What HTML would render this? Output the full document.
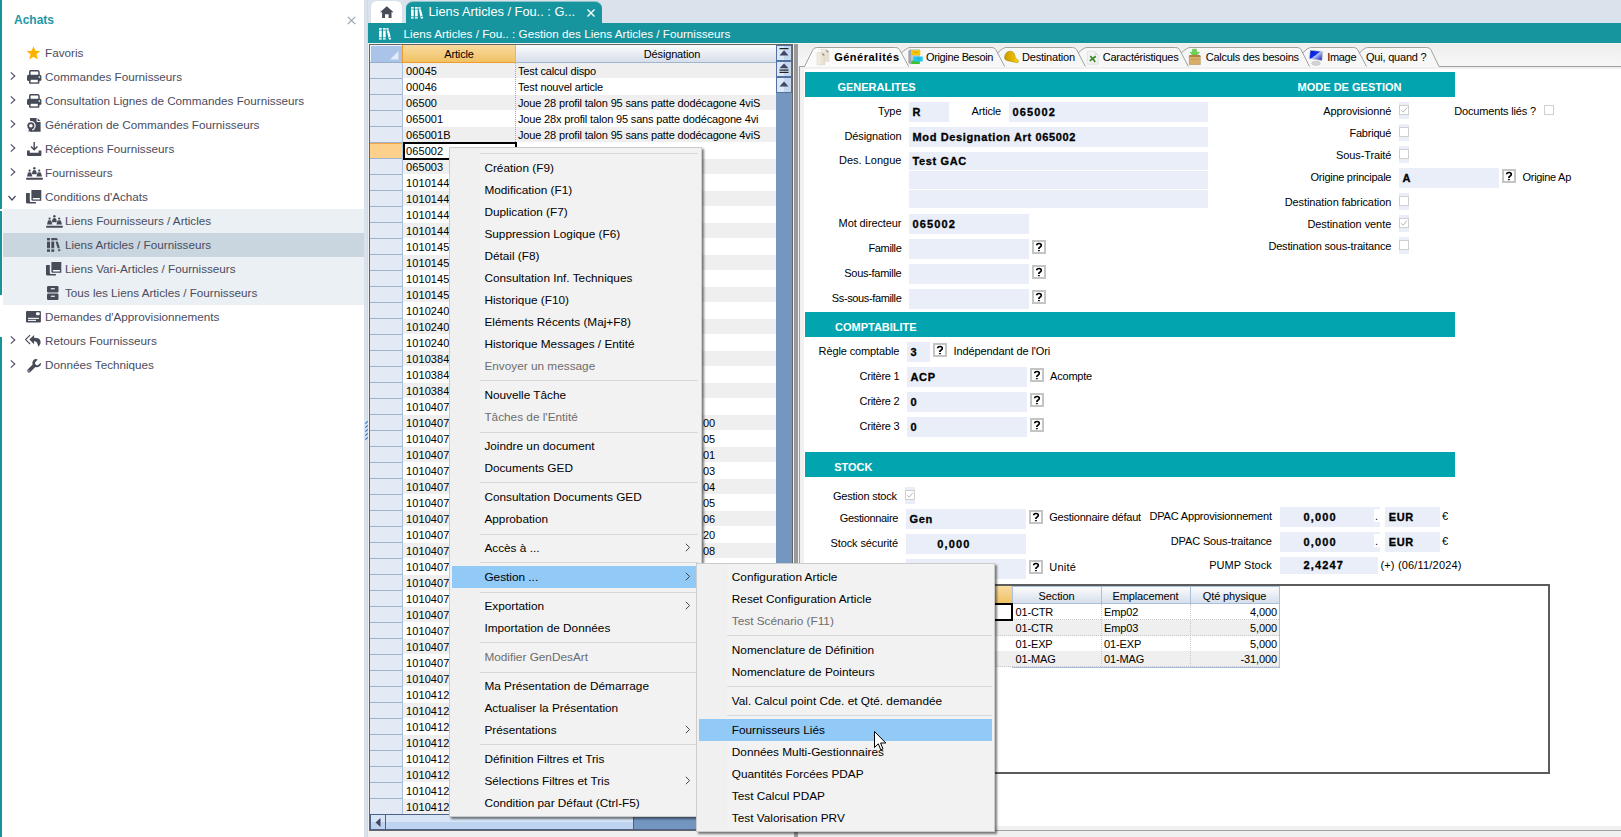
<!DOCTYPE html><html><head><meta charset="utf-8"><style>
*{margin:0;padding:0;box-sizing:border-box}
html,body{width:1621px;height:837px;overflow:hidden;background:#fff}
body{position:relative;font-family:"Liberation Sans",sans-serif;color:#000}
div{position:absolute}
.t{line-height:0;white-space:nowrap}
svg{position:absolute;overflow:visible}
</style></head><body><div style="left:0;top:0;width:364px;height:837px;background:#fff"></div>
<div style="left:0;top:0;width:2px;height:209px;background:#17939c"></div>
<div style="left:0;top:211px;width:2px;height:84px;background:#17939c"></div>
<div style="left:0;top:337px;width:2px;height:500px;background:#17939c"></div>
<div class="t" style="left:14px;top:19.54px;font-size:12px;font-weight:bold;color:#1a98a6">Achats</div>
<svg style="left:347px;top:16px" width="9" height="9" viewBox="0 0 9 9"><path d="M0.8 0.8 L8.2 8.2 M8.2 0.8 L0.8 8.2" stroke="#9aa2aa" stroke-width="1.2"/></svg>
<div style="left:3px;top:209px;width:361px;height:96px;background:#ebf0f4"></div>
<div style="left:3px;top:233px;width:361px;height:24px;background:#c9d6e0"></div>
<svg style="left:26px;top:46px" width="15" height="14" viewBox="0 0 15 14"><path d="M7.5 0.3 L9.4 4.8 L14.4 5.1 L10.5 8.3 L11.8 13.6 L7.5 10.8 L3.2 13.6 L4.5 8.3 L0.6 5.1 L5.6 4.8 Z" fill="#ffb300"/></svg>
<div class="t" style="left:45px;top:52.95px;font-size:11.7px;color:#4a4c5e">Favoris</div>
<svg style="left:9.7px;top:71.6px" width="6" height="8" viewBox="0 0 6 8"><path d="M0.8 0.4 L4.8 4 L0.8 7.6" fill="none" stroke="#4a4560" stroke-width="1.05"/></svg>
<svg style="left:26.8px;top:70px" width="15" height="14" viewBox="0 0 15 14"><path d="M2.8 5 V1.6 Q2.8 0.8 3.6 0.8 H10.6 Q12 0.8 12 2.2 V5" fill="none" stroke="#474b58" stroke-width="1.5"/><rect x="0" y="4.8" width="14.4" height="6.2" rx="1.6" fill="#474b58"/><rect x="2" y="8.4" width="10.4" height="5.4" rx="0.8" fill="#474b58"/><rect x="3.6" y="9.8" width="7.2" height="2.6" fill="#fff"/><circle cx="12.3" cy="7" r="0.85" fill="#fff"/></svg>
<div class="t" style="left:45px;top:76.95px;font-size:11.7px;color:#4a4c5e">Commandes Fournisseurs</div>
<svg style="left:9.7px;top:95.6px" width="6" height="8" viewBox="0 0 6 8"><path d="M0.8 0.4 L4.8 4 L0.8 7.6" fill="none" stroke="#4a4560" stroke-width="1.05"/></svg>
<svg style="left:26.8px;top:94px" width="15" height="14" viewBox="0 0 15 14"><path d="M2.8 5 V1.6 Q2.8 0.8 3.6 0.8 H10.6 Q12 0.8 12 2.2 V5" fill="none" stroke="#474b58" stroke-width="1.5"/><rect x="0" y="4.8" width="14.4" height="6.2" rx="1.6" fill="#474b58"/><rect x="2" y="8.4" width="10.4" height="5.4" rx="0.8" fill="#474b58"/><rect x="3.6" y="9.8" width="7.2" height="2.6" fill="#fff"/><circle cx="12.3" cy="7" r="0.85" fill="#fff"/></svg>
<div class="t" style="left:45px;top:100.95px;font-size:11.7px;color:#4a4c5e">Consultation Lignes de Commandes Fournisseurs</div>
<svg style="left:9.7px;top:119.6px" width="6" height="8" viewBox="0 0 6 8"><path d="M0.8 0.4 L4.8 4 L0.8 7.6" fill="none" stroke="#4a4560" stroke-width="1.05"/></svg>
<svg style="left:26px;top:118px" width="15" height="14" viewBox="0 0 15 14"><path d="M4 0 H10.6 V4 H14.6 V13.8 H4 Z" fill="#474b58"/><path d="M11.6 0.2 L14.5 3.1 H11.6 Z" fill="#474b58"/><circle cx="4.9" cy="7.8" r="4.8" fill="#fff"/><path d="M2.9 10 L2.5 13.8 L4.3 12.9 L6 13.8 L6.3 10.2 Z" fill="#474b58"/><circle cx="4.9" cy="7.8" r="3.6" fill="#474b58"/><circle cx="4.9" cy="7.8" r="1.8" fill="#fff"/></svg>
<div class="t" style="left:45px;top:124.95px;font-size:11.7px;color:#4a4c5e">Génération de Commandes Fournisseurs</div>
<svg style="left:9.7px;top:143.6px" width="6" height="8" viewBox="0 0 6 8"><path d="M0.8 0.4 L4.8 4 L0.8 7.6" fill="none" stroke="#4a4560" stroke-width="1.05"/></svg>
<svg style="left:26.6px;top:142px" width="15" height="14" viewBox="0 0 15 14"><path d="M7.2 0 V7.6 M4 4.6 L7.2 7.8 L10.4 4.6" fill="none" stroke="#474b58" stroke-width="1.4"/><path d="M0 8.4 H2.8 V10.8 H11.6 V8.4 H14.4 V13 Q14.4 14 13.4 14 H1 Q0 14 0 13 Z" fill="#474b58"/></svg>
<div class="t" style="left:45px;top:148.95px;font-size:11.7px;color:#4a4c5e">Réceptions Fournisseurs</div>
<svg style="left:9.7px;top:167.6px" width="6" height="8" viewBox="0 0 6 8"><path d="M0.8 0.4 L4.8 4 L0.8 7.6" fill="none" stroke="#4a4560" stroke-width="1.05"/></svg>
<svg style="left:25.8px;top:167px" width="17" height="13" viewBox="0 0 17 13"><circle cx="8.4" cy="1.2" r="1.2" fill="#474b58"/><circle cx="3.6" cy="3.6" r="1.1" fill="#474b58"/><circle cx="13.2" cy="3.6" r="1.1" fill="#474b58"/><path d="M6 7.2 Q6.2 3 8.4 3 Q10.6 3 10.8 7.2 Z" fill="#474b58"/><path d="M1 9.5 L2 5.6 Q3.6 4.8 5.2 5.6 L6.4 9.5 Z M10.4 9.5 L11.6 5.6 Q13.2 4.8 14.8 5.6 L16 9.5 Z" fill="#474b58"/><rect x="0" y="10.8" width="17" height="1.9" rx="0.9" fill="#474b58"/></svg>
<div class="t" style="left:45px;top:172.95px;font-size:11.7px;color:#4a4c5e">Fournisseurs</div>
<svg style="left:8px;top:195px" width="8" height="6" viewBox="0 0 8 6"><path d="M0.5 1 L4 5 L7.5 1" fill="none" stroke="#444a5a" stroke-width="1.2"/></svg>
<svg style="left:25.8px;top:190.1px" width="16" height="14" viewBox="0 0 16 14"><path d="M5.4 0.6 Q5.4 0 6 0 H15.3 V10.7 H6.6 Q5.4 10.7 5.4 9.5 Z" fill="#474b58"/><rect x="6.7" y="8" width="7.4" height="1.6" rx="0.8" fill="#fff"/><path d="M0 3.5 Q0 3 0.6 3 H3.8 V10.8 Q3.8 12 5 12 H9.9 V13.6 H1.6 Q0 13.6 0 12 Z" fill="#474b58"/></svg>
<div class="t" style="left:45px;top:196.95px;font-size:11.7px;color:#4a4c5e">Conditions d'Achats</div>
<svg style="left:45.8px;top:215px" width="17" height="13" viewBox="0 0 17 13"><circle cx="8.4" cy="1.2" r="1.2" fill="#474b58"/><circle cx="3.6" cy="3.6" r="1.1" fill="#474b58"/><circle cx="13.2" cy="3.6" r="1.1" fill="#474b58"/><path d="M6 7.2 Q6.2 3 8.4 3 Q10.6 3 10.8 7.2 Z" fill="#474b58"/><path d="M1 9.5 L2 5.6 Q3.6 4.8 5.2 5.6 L6.4 9.5 Z M10.4 9.5 L11.6 5.6 Q13.2 4.8 14.8 5.6 L16 9.5 Z" fill="#474b58"/><rect x="0" y="10.8" width="17" height="1.9" rx="0.9" fill="#474b58"/></svg>
<div class="t" style="left:65px;top:220.95px;font-size:11.7px;color:#4a4c5e">Liens Fournisseurs / Articles</div>
<svg style="left:47px;top:238px" width="14" height="14" viewBox="0 0 14 14"><rect x="0" y="0" width="3" height="13.8" fill="#474b58"/><rect x="4.3" y="0" width="2.9" height="13.8" fill="#474b58"/><path d="M7.2 0 L9.6 0 L11 1.4 L9.6 2.2 L7.2 2 Z" fill="#474b58"/><path d="M8.3 2.6 L10.4 2.3 L13.6 12.4 L11.5 13.6 Z" fill="#474b58"/><rect x="0" y="2.2" width="14" height="1.6" fill="#c9d6e0" opacity="0.75"/><rect x="0" y="9.9" width="14" height="1.6" fill="#c9d6e0" opacity="0.75"/></svg>
<div class="t" style="left:65px;top:244.95px;font-size:11.7px;color:#4a4c5e">Liens Articles / Fournisseurs</div>
<svg style="left:45.8px;top:262.1px" width="16" height="14" viewBox="0 0 16 14"><path d="M5.4 0.6 Q5.4 0 6 0 H15.3 V10.7 H6.6 Q5.4 10.7 5.4 9.5 Z" fill="#474b58"/><rect x="6.7" y="8" width="7.4" height="1.6" rx="0.8" fill="#fff"/><path d="M0 3.5 Q0 3 0.6 3 H3.8 V10.8 Q3.8 12 5 12 H9.9 V13.6 H1.6 Q0 13.6 0 12 Z" fill="#474b58"/></svg>
<div class="t" style="left:65px;top:268.95px;font-size:11.7px;color:#4a4c5e">Liens Vari-Articles / Fournisseurs</div>
<svg style="left:46.5px;top:286px" width="12" height="14" viewBox="0 0 12 14"><rect x="0" y="0" width="11.5" height="6.4" rx="1.2" fill="#474b58"/><rect x="0" y="7.5" width="11.5" height="6.4" rx="1.2" fill="#474b58"/><rect x="3.8" y="2.2" width="4" height="1.1" fill="#fff"/><rect x="3.8" y="9.7" width="4" height="1.1" fill="#fff"/></svg>
<div class="t" style="left:65px;top:292.95px;font-size:11.7px;color:#4a4c5e">Tous les Liens Articles / Fournisseurs</div>
<svg style="left:26px;top:311.2px" width="15" height="12" viewBox="0 0 15 12"><rect x="0" y="0" width="14.9" height="11.4" rx="1" fill="#474b58"/><rect x="10" y="1.2" width="3.7" height="3" rx="1" fill="#fff"/><rect x="2" y="6.8" width="11" height="1.1" fill="#fff"/><rect x="2" y="8.8" width="8" height="1.1" fill="#fff"/></svg>
<div class="t" style="left:45px;top:316.95px;font-size:11.7px;color:#4a4c5e">Demandes d'Approvisionnements</div>
<svg style="left:9.7px;top:335.6px" width="6" height="8" viewBox="0 0 6 8"><path d="M0.8 0.4 L4.8 4 L0.8 7.6" fill="none" stroke="#4a4560" stroke-width="1.05"/></svg>
<svg style="left:25.4px;top:334.9px" width="16" height="12" viewBox="0 0 16 12"><path d="M5.1 0.2 L0.6 4.6 L5.1 9" fill="none" stroke="#474b58" stroke-width="1.1"/><path d="M9.1 0 L4.3 4.6 L9.1 9.2 V6 Q12.5 6.2 13.2 11.7 Q16.6 9 15.2 5.2 Q14 2.8 9.1 2.8 Z" fill="#474b58"/></svg>
<div class="t" style="left:45px;top:340.95px;font-size:11.7px;color:#4a4c5e">Retours Fournisseurs</div>
<svg style="left:9.7px;top:359.6px" width="6" height="8" viewBox="0 0 6 8"><path d="M0.8 0.4 L4.8 4 L0.8 7.6" fill="none" stroke="#4a4560" stroke-width="1.05"/></svg>
<svg style="left:26.9px;top:358.7px" width="14" height="14" viewBox="0 0 14 14"><path d="M13.8 3.4 L11 6.2 Q9.6 6.6 8.6 5.6 Q7.7 4.4 8.2 3.2 L10.8 0.5 Q8 -0.6 6.2 1.4 Q4.8 3 5.6 5.4 L0.7 10.6 Q-0.3 11.9 0.8 13.1 Q2 14.2 3.3 13 L8.4 8 Q10.8 8.8 12.6 7.2 Q14.4 5.5 13.8 3.4 Z" fill="#474b58"/><circle cx="2" cy="11.9" r="0.7" fill="#ddd"/></svg>
<div class="t" style="left:45px;top:364.95px;font-size:11.7px;color:#4a4c5e">Données Techniques</div>
<div style="left:364px;top:0;width:1257px;height:837px;background:#f0f0f0"></div>
<div style="left:364px;top:0;width:3px;height:837px;background:#d9e2eb"></div>
<div style="left:367px;top:0;width:1px;height:837px;background:#c6dcf4"></div>
<div style="left:368px;top:0;width:1253px;height:23px;background:#dae3eb"></div>
<div style="left:370.5px;top:1px;width:31px;height:22px;background:#fff;border-radius:6px 6px 0 0"></div>
<svg style="left:379.8px;top:6px" width="14" height="12" viewBox="0 0 14 12"><path d="M6.8 0.2 L13.6 6.3 H11.5 V11.9 H8.6 V8.2 H5 V11.9 H2.1 V6.3 H0 Z" fill="#474b58"/></svg>
<div style="left:406px;top:1px;width:196px;height:23px;background:#17959e;border-radius:7px 7px 0 0;border-top:1px solid #8cc3c7"></div>
<svg style="left:411px;top:7.2px" width="13" height="12" viewBox="0 0 13 12"><rect x="0" y="0" width="2.7" height="11.6" fill="#fff"/><rect x="4" y="0" width="2.7" height="11.6" fill="#fff"/><path d="M7.2 0.3 L9.4 0 L12.2 11.2 L10 11.7 Z" fill="#fff"/><rect x="0" y="1.7" width="7" height="0.8" fill="#17959e"/><rect x="0" y="9.4" width="7" height="0.8" fill="#17959e"/><path d="M7.4 2.3 L9.8 1.9 M9.9 9.6 L12.2 9.1" stroke="#17959e" stroke-width="0.8"/></svg>
<div class="t" style="left:428.5px;top:12.36px;font-size:12.8px;color:#fff">Liens Articles / Fou.. : G...</div>
<svg style="left:587px;top:9px" width="8" height="8" viewBox="0 0 8 8"><path d="M0.5 0.5 L7.5 7.5 M7.5 0.5 L0.5 7.5" stroke="#fff" stroke-width="1.4"/></svg>
<div style="left:368px;top:23px;width:1253px;height:20px;background:#17959e"></div>
<div style="left:368px;top:43px;width:1253px;height:1px;background:#f4f4f0"></div>
<svg style="left:379px;top:28.2px" width="13" height="12" viewBox="0 0 13 12"><rect x="0" y="0" width="2.7" height="11.6" fill="#fff"/><rect x="4" y="0" width="2.7" height="11.6" fill="#fff"/><path d="M7.2 0.3 L9.4 0 L12.2 11.2 L10 11.7 Z" fill="#fff"/><rect x="0" y="1.7" width="7" height="0.8" fill="#17959e"/><rect x="0" y="9.4" width="7" height="0.8" fill="#17959e"/><path d="M7.4 2.3 L9.8 1.9 M9.9 9.6 L12.2 9.1" stroke="#17959e" stroke-width="0.8"/></svg>
<div class="t" style="left:403.6px;top:33.95px;font-size:11.7px;color:#fff">Liens Articles / Fou.. : Gestion des Liens Articles / Fournisseurs</div>
<div style="left:369px;top:44px;width:424px;height:787px;background:#646464"></div>
<div style="left:370px;top:45px;width:422px;height:769px;background:#fff"></div>
<div style="left:370px;top:45px;width:32px;height:17px;background:#a9c4e8;border-top:1px solid #eef4fc;border-left:1px solid #eef4fc"></div>
<svg style="left:390px;top:51px" width="9" height="9" viewBox="0 0 9 9"><path d="M8.5 0 V8.5 H0 Z" fill="#e4ebf6"/></svg>
<div style="left:370px;top:62px;width:32px;height:1px;background:#98aec8"></div>
<div style="left:402px;top:45px;width:1px;height:18px;background:#f39a2c"></div>
<div style="left:403px;top:45px;width:112px;height:17px;background:linear-gradient(#f8dba0,#f0c163)"></div>
<div style="left:403px;top:62px;width:112px;height:1px;background:#f39a2c"></div>
<div style="left:515px;top:45px;width:1px;height:18px;background:#a9c0dc"></div>
<div style="left:516px;top:45px;width:260px;height:17px;background:linear-gradient(#fbfcfd,#d7dfeb)"></div>
<div style="left:516px;top:62px;width:260px;height:1px;background:#a0b6d0"></div>
<div class="t" style="left:259px;width:400px;text-align:center;top:54.19px;font-size:11px;letter-spacing:-0.16px;">Article</div>
<div class="t" style="left:472px;width:400px;text-align:center;top:54.19px;font-size:11px;letter-spacing:-0.16px;">Désignation</div>
<div style="left:370px;top:63px;width:32px;height:15px;background:#e3eaf6"></div>
<div style="left:370px;top:78px;width:32px;height:1px;background:#9db3cd"></div>
<div style="left:403px;top:63px;width:373px;height:15px;background:#efefef"></div>
<div class="t" style="left:406px;top:70.69px;font-size:11px;letter-spacing:0.1px;">00045</div>
<div class="t" style="left:518px;top:70.69px;font-size:11px;letter-spacing:-0.16px;">Test calcul dispo</div>
<div style="left:370px;top:79px;width:32px;height:15px;background:#e3eaf6"></div>
<div style="left:370px;top:94px;width:32px;height:1px;background:#9db3cd"></div>
<div style="left:403px;top:79px;width:373px;height:16px;background:#ffffff"></div>
<div class="t" style="left:406px;top:86.69px;font-size:11px;letter-spacing:0.1px;">00046</div>
<div class="t" style="left:518px;top:86.69px;font-size:11px;letter-spacing:-0.16px;">Test nouvel article</div>
<div style="left:370px;top:95px;width:32px;height:15px;background:#e3eaf6"></div>
<div style="left:370px;top:110px;width:32px;height:1px;background:#9db3cd"></div>
<div style="left:403px;top:95px;width:373px;height:15px;background:#efefef"></div>
<div class="t" style="left:406px;top:102.69px;font-size:11px;letter-spacing:0.1px;">06500</div>
<div class="t" style="left:518px;top:102.69px;font-size:11px;letter-spacing:-0.16px;">Joue 28 profil talon 95 sans patte dodécagone 4viS</div>
<div style="left:370px;top:111px;width:32px;height:15px;background:#e3eaf6"></div>
<div style="left:370px;top:126px;width:32px;height:1px;background:#9db3cd"></div>
<div style="left:403px;top:111px;width:373px;height:16px;background:#ffffff"></div>
<div class="t" style="left:406px;top:118.69px;font-size:11px;letter-spacing:0.1px;">065001</div>
<div class="t" style="left:518px;top:118.69px;font-size:11px;letter-spacing:-0.16px;">Joue 28x profil talon 95 sans patte dodécagone 4vi</div>
<div style="left:370px;top:127px;width:32px;height:15px;background:#e3eaf6"></div>
<div style="left:370px;top:142px;width:32px;height:1px;background:#9db3cd"></div>
<div style="left:403px;top:127px;width:373px;height:15px;background:#efefef"></div>
<div class="t" style="left:406px;top:134.69px;font-size:11px;letter-spacing:0.1px;">065001B</div>
<div class="t" style="left:518px;top:134.69px;font-size:11px;letter-spacing:-0.16px;">Joue 28 profil talon 95 sans patte dodécagone 4viS</div>
<div style="left:370px;top:143px;width:32px;height:15px;background:#e3eaf6"></div>
<div style="left:370px;top:158px;width:32px;height:1px;background:#9db3cd"></div>
<div style="left:403px;top:143px;width:373px;height:16px;background:#ffffff"></div>
<div class="t" style="left:406px;top:150.69px;font-size:11px;letter-spacing:0.1px;">065002</div>
<div class="t" style="left:518px;top:150.69px;font-size:11px;letter-spacing:-0.16px;">Mod Designation Art 065002</div>
<div style="left:370px;top:159px;width:32px;height:15px;background:#e3eaf6"></div>
<div style="left:370px;top:174px;width:32px;height:1px;background:#9db3cd"></div>
<div style="left:403px;top:159px;width:373px;height:15px;background:#efefef"></div>
<div class="t" style="left:406px;top:166.69px;font-size:11px;letter-spacing:0.1px;">065003</div>
<div style="left:370px;top:175px;width:32px;height:15px;background:#e3eaf6"></div>
<div style="left:370px;top:190px;width:32px;height:1px;background:#9db3cd"></div>
<div style="left:403px;top:175px;width:373px;height:16px;background:#ffffff"></div>
<div class="t" style="left:406px;top:182.69px;font-size:11px;letter-spacing:0.1px;">1010144</div>
<div style="left:370px;top:191px;width:32px;height:15px;background:#e3eaf6"></div>
<div style="left:370px;top:206px;width:32px;height:1px;background:#9db3cd"></div>
<div style="left:403px;top:191px;width:373px;height:15px;background:#efefef"></div>
<div class="t" style="left:406px;top:198.69px;font-size:11px;letter-spacing:0.1px;">1010144l</div>
<div style="left:370px;top:207px;width:32px;height:15px;background:#e3eaf6"></div>
<div style="left:370px;top:222px;width:32px;height:1px;background:#9db3cd"></div>
<div style="left:403px;top:207px;width:373px;height:16px;background:#ffffff"></div>
<div class="t" style="left:406px;top:214.69px;font-size:11px;letter-spacing:0.1px;">1010144_</div>
<div style="left:370px;top:223px;width:32px;height:15px;background:#e3eaf6"></div>
<div style="left:370px;top:238px;width:32px;height:1px;background:#9db3cd"></div>
<div style="left:403px;top:223px;width:373px;height:15px;background:#efefef"></div>
<div class="t" style="left:406px;top:230.69px;font-size:11px;letter-spacing:0.1px;">1010144_</div>
<div style="left:370px;top:239px;width:32px;height:15px;background:#e3eaf6"></div>
<div style="left:370px;top:254px;width:32px;height:1px;background:#9db3cd"></div>
<div style="left:403px;top:239px;width:373px;height:16px;background:#ffffff"></div>
<div class="t" style="left:406px;top:246.69px;font-size:11px;letter-spacing:0.1px;">1010145</div>
<div style="left:370px;top:255px;width:32px;height:15px;background:#e3eaf6"></div>
<div style="left:370px;top:270px;width:32px;height:1px;background:#9db3cd"></div>
<div style="left:403px;top:255px;width:373px;height:15px;background:#efefef"></div>
<div class="t" style="left:406px;top:262.69px;font-size:11px;letter-spacing:0.1px;">1010145l</div>
<div style="left:370px;top:271px;width:32px;height:15px;background:#e3eaf6"></div>
<div style="left:370px;top:286px;width:32px;height:1px;background:#9db3cd"></div>
<div style="left:403px;top:271px;width:373px;height:16px;background:#ffffff"></div>
<div class="t" style="left:406px;top:278.69px;font-size:11px;letter-spacing:0.1px;">1010145_</div>
<div style="left:370px;top:287px;width:32px;height:15px;background:#e3eaf6"></div>
<div style="left:370px;top:302px;width:32px;height:1px;background:#9db3cd"></div>
<div style="left:403px;top:287px;width:373px;height:15px;background:#efefef"></div>
<div class="t" style="left:406px;top:294.69px;font-size:11px;letter-spacing:0.1px;">1010145_</div>
<div style="left:370px;top:303px;width:32px;height:15px;background:#e3eaf6"></div>
<div style="left:370px;top:318px;width:32px;height:1px;background:#9db3cd"></div>
<div style="left:403px;top:303px;width:373px;height:16px;background:#ffffff"></div>
<div class="t" style="left:406px;top:310.69px;font-size:11px;letter-spacing:0.1px;">1010240</div>
<div style="left:370px;top:319px;width:32px;height:15px;background:#e3eaf6"></div>
<div style="left:370px;top:334px;width:32px;height:1px;background:#9db3cd"></div>
<div style="left:403px;top:319px;width:373px;height:15px;background:#efefef"></div>
<div class="t" style="left:406px;top:326.69px;font-size:11px;letter-spacing:0.1px;">1010240_</div>
<div style="left:370px;top:335px;width:32px;height:15px;background:#e3eaf6"></div>
<div style="left:370px;top:350px;width:32px;height:1px;background:#9db3cd"></div>
<div style="left:403px;top:335px;width:373px;height:16px;background:#ffffff"></div>
<div class="t" style="left:406px;top:342.69px;font-size:11px;letter-spacing:0.1px;">1010240_</div>
<div style="left:370px;top:351px;width:32px;height:15px;background:#e3eaf6"></div>
<div style="left:370px;top:366px;width:32px;height:1px;background:#9db3cd"></div>
<div style="left:403px;top:351px;width:373px;height:15px;background:#efefef"></div>
<div class="t" style="left:406px;top:358.69px;font-size:11px;letter-spacing:0.1px;">1010384</div>
<div style="left:370px;top:367px;width:32px;height:15px;background:#e3eaf6"></div>
<div style="left:370px;top:382px;width:32px;height:1px;background:#9db3cd"></div>
<div style="left:403px;top:367px;width:373px;height:16px;background:#ffffff"></div>
<div class="t" style="left:406px;top:374.69px;font-size:11px;letter-spacing:0.1px;">1010384_</div>
<div style="left:370px;top:383px;width:32px;height:15px;background:#e3eaf6"></div>
<div style="left:370px;top:398px;width:32px;height:1px;background:#9db3cd"></div>
<div style="left:403px;top:383px;width:373px;height:15px;background:#efefef"></div>
<div class="t" style="left:406px;top:390.69px;font-size:11px;letter-spacing:0.1px;">1010384_</div>
<div style="left:370px;top:399px;width:32px;height:15px;background:#e3eaf6"></div>
<div style="left:370px;top:414px;width:32px;height:1px;background:#9db3cd"></div>
<div style="left:403px;top:399px;width:373px;height:16px;background:#ffffff"></div>
<div class="t" style="left:406px;top:406.69px;font-size:11px;letter-spacing:0.1px;">1010407</div>
<div style="left:370px;top:415px;width:32px;height:15px;background:#e3eaf6"></div>
<div style="left:370px;top:430px;width:32px;height:1px;background:#9db3cd"></div>
<div style="left:403px;top:415px;width:373px;height:15px;background:#efefef"></div>
<div class="t" style="left:406px;top:422.69px;font-size:11px;letter-spacing:0.1px;">1010407_</div>
<div class="t" style="left:703px;top:422.69px;font-size:11px;letter-spacing:-0.16px;">00</div>
<div style="left:370px;top:431px;width:32px;height:15px;background:#e3eaf6"></div>
<div style="left:370px;top:446px;width:32px;height:1px;background:#9db3cd"></div>
<div style="left:403px;top:431px;width:373px;height:16px;background:#ffffff"></div>
<div class="t" style="left:406px;top:438.69px;font-size:11px;letter-spacing:0.1px;">1010407_</div>
<div class="t" style="left:703px;top:438.69px;font-size:11px;letter-spacing:-0.16px;">05</div>
<div style="left:370px;top:447px;width:32px;height:15px;background:#e3eaf6"></div>
<div style="left:370px;top:462px;width:32px;height:1px;background:#9db3cd"></div>
<div style="left:403px;top:447px;width:373px;height:15px;background:#efefef"></div>
<div class="t" style="left:406px;top:454.69px;font-size:11px;letter-spacing:0.1px;">1010407_</div>
<div class="t" style="left:703px;top:454.69px;font-size:11px;letter-spacing:-0.16px;">01</div>
<div style="left:370px;top:463px;width:32px;height:15px;background:#e3eaf6"></div>
<div style="left:370px;top:478px;width:32px;height:1px;background:#9db3cd"></div>
<div style="left:403px;top:463px;width:373px;height:16px;background:#ffffff"></div>
<div class="t" style="left:406px;top:470.69px;font-size:11px;letter-spacing:0.1px;">1010407_</div>
<div class="t" style="left:703px;top:470.69px;font-size:11px;letter-spacing:-0.16px;">03</div>
<div style="left:370px;top:479px;width:32px;height:15px;background:#e3eaf6"></div>
<div style="left:370px;top:494px;width:32px;height:1px;background:#9db3cd"></div>
<div style="left:403px;top:479px;width:373px;height:15px;background:#efefef"></div>
<div class="t" style="left:406px;top:486.69px;font-size:11px;letter-spacing:0.1px;">1010407_</div>
<div class="t" style="left:703px;top:486.69px;font-size:11px;letter-spacing:-0.16px;">04</div>
<div style="left:370px;top:495px;width:32px;height:15px;background:#e3eaf6"></div>
<div style="left:370px;top:510px;width:32px;height:1px;background:#9db3cd"></div>
<div style="left:403px;top:495px;width:373px;height:16px;background:#ffffff"></div>
<div class="t" style="left:406px;top:502.69px;font-size:11px;letter-spacing:0.1px;">1010407_</div>
<div class="t" style="left:703px;top:502.69px;font-size:11px;letter-spacing:-0.16px;">05</div>
<div style="left:370px;top:511px;width:32px;height:15px;background:#e3eaf6"></div>
<div style="left:370px;top:526px;width:32px;height:1px;background:#9db3cd"></div>
<div style="left:403px;top:511px;width:373px;height:15px;background:#efefef"></div>
<div class="t" style="left:406px;top:518.69px;font-size:11px;letter-spacing:0.1px;">1010407_</div>
<div class="t" style="left:703px;top:518.69px;font-size:11px;letter-spacing:-0.16px;">06</div>
<div style="left:370px;top:527px;width:32px;height:15px;background:#e3eaf6"></div>
<div style="left:370px;top:542px;width:32px;height:1px;background:#9db3cd"></div>
<div style="left:403px;top:527px;width:373px;height:16px;background:#ffffff"></div>
<div class="t" style="left:406px;top:534.69px;font-size:11px;letter-spacing:0.1px;">1010407_</div>
<div class="t" style="left:703px;top:534.69px;font-size:11px;letter-spacing:-0.16px;">20</div>
<div style="left:370px;top:543px;width:32px;height:15px;background:#e3eaf6"></div>
<div style="left:370px;top:558px;width:32px;height:1px;background:#9db3cd"></div>
<div style="left:403px;top:543px;width:373px;height:15px;background:#efefef"></div>
<div class="t" style="left:406px;top:550.69px;font-size:11px;letter-spacing:0.1px;">1010407_</div>
<div class="t" style="left:703px;top:550.69px;font-size:11px;letter-spacing:-0.16px;">08</div>
<div style="left:370px;top:559px;width:32px;height:15px;background:#e3eaf6"></div>
<div style="left:370px;top:574px;width:32px;height:1px;background:#9db3cd"></div>
<div style="left:403px;top:559px;width:373px;height:16px;background:#ffffff"></div>
<div class="t" style="left:406px;top:566.69px;font-size:11px;letter-spacing:0.1px;">1010407_</div>
<div class="t" style="left:703px;top:566.69px;font-size:11px;letter-spacing:-0.16px;">10</div>
<div style="left:370px;top:575px;width:32px;height:15px;background:#e3eaf6"></div>
<div style="left:370px;top:590px;width:32px;height:1px;background:#9db3cd"></div>
<div style="left:403px;top:575px;width:373px;height:15px;background:#efefef"></div>
<div class="t" style="left:406px;top:582.69px;font-size:11px;letter-spacing:0.1px;">1010407_</div>
<div style="left:370px;top:591px;width:32px;height:15px;background:#e3eaf6"></div>
<div style="left:370px;top:606px;width:32px;height:1px;background:#9db3cd"></div>
<div style="left:403px;top:591px;width:373px;height:16px;background:#ffffff"></div>
<div class="t" style="left:406px;top:598.69px;font-size:11px;letter-spacing:0.1px;">1010407_</div>
<div style="left:370px;top:607px;width:32px;height:15px;background:#e3eaf6"></div>
<div style="left:370px;top:622px;width:32px;height:1px;background:#9db3cd"></div>
<div style="left:403px;top:607px;width:373px;height:15px;background:#efefef"></div>
<div class="t" style="left:406px;top:614.69px;font-size:11px;letter-spacing:0.1px;">1010407_</div>
<div style="left:370px;top:623px;width:32px;height:15px;background:#e3eaf6"></div>
<div style="left:370px;top:638px;width:32px;height:1px;background:#9db3cd"></div>
<div style="left:403px;top:623px;width:373px;height:16px;background:#ffffff"></div>
<div class="t" style="left:406px;top:630.69px;font-size:11px;letter-spacing:0.1px;">1010407_</div>
<div style="left:370px;top:639px;width:32px;height:15px;background:#e3eaf6"></div>
<div style="left:370px;top:654px;width:32px;height:1px;background:#9db3cd"></div>
<div style="left:403px;top:639px;width:373px;height:15px;background:#efefef"></div>
<div class="t" style="left:406px;top:646.69px;font-size:11px;letter-spacing:0.1px;">1010407_</div>
<div style="left:370px;top:655px;width:32px;height:15px;background:#e3eaf6"></div>
<div style="left:370px;top:670px;width:32px;height:1px;background:#9db3cd"></div>
<div style="left:403px;top:655px;width:373px;height:16px;background:#ffffff"></div>
<div class="t" style="left:406px;top:662.69px;font-size:11px;letter-spacing:0.1px;">1010407_</div>
<div style="left:370px;top:671px;width:32px;height:15px;background:#e3eaf6"></div>
<div style="left:370px;top:686px;width:32px;height:1px;background:#9db3cd"></div>
<div style="left:403px;top:671px;width:373px;height:15px;background:#efefef"></div>
<div class="t" style="left:406px;top:678.69px;font-size:11px;letter-spacing:0.1px;">1010407_</div>
<div style="left:370px;top:687px;width:32px;height:15px;background:#e3eaf6"></div>
<div style="left:370px;top:702px;width:32px;height:1px;background:#9db3cd"></div>
<div style="left:403px;top:687px;width:373px;height:16px;background:#ffffff"></div>
<div class="t" style="left:406px;top:694.69px;font-size:11px;letter-spacing:0.1px;">1010412</div>
<div style="left:370px;top:703px;width:32px;height:15px;background:#e3eaf6"></div>
<div style="left:370px;top:718px;width:32px;height:1px;background:#9db3cd"></div>
<div style="left:403px;top:703px;width:373px;height:15px;background:#efefef"></div>
<div class="t" style="left:406px;top:710.69px;font-size:11px;letter-spacing:0.1px;">1010412_</div>
<div style="left:370px;top:719px;width:32px;height:15px;background:#e3eaf6"></div>
<div style="left:370px;top:734px;width:32px;height:1px;background:#9db3cd"></div>
<div style="left:403px;top:719px;width:373px;height:16px;background:#ffffff"></div>
<div class="t" style="left:406px;top:726.69px;font-size:11px;letter-spacing:0.1px;">1010412_</div>
<div style="left:370px;top:735px;width:32px;height:15px;background:#e3eaf6"></div>
<div style="left:370px;top:750px;width:32px;height:1px;background:#9db3cd"></div>
<div style="left:403px;top:735px;width:373px;height:15px;background:#efefef"></div>
<div class="t" style="left:406px;top:742.69px;font-size:11px;letter-spacing:0.1px;">1010412_</div>
<div style="left:370px;top:751px;width:32px;height:15px;background:#e3eaf6"></div>
<div style="left:370px;top:766px;width:32px;height:1px;background:#9db3cd"></div>
<div style="left:403px;top:751px;width:373px;height:16px;background:#ffffff"></div>
<div class="t" style="left:406px;top:758.69px;font-size:11px;letter-spacing:0.1px;">1010412_</div>
<div style="left:370px;top:767px;width:32px;height:15px;background:#e3eaf6"></div>
<div style="left:370px;top:782px;width:32px;height:1px;background:#9db3cd"></div>
<div style="left:403px;top:767px;width:373px;height:15px;background:#efefef"></div>
<div class="t" style="left:406px;top:774.69px;font-size:11px;letter-spacing:0.1px;">1010412_</div>
<div style="left:370px;top:783px;width:32px;height:15px;background:#e3eaf6"></div>
<div style="left:370px;top:798px;width:32px;height:1px;background:#9db3cd"></div>
<div style="left:403px;top:783px;width:373px;height:16px;background:#ffffff"></div>
<div class="t" style="left:406px;top:790.69px;font-size:11px;letter-spacing:0.1px;">1010412_</div>
<div style="left:370px;top:799px;width:32px;height:15px;background:#e3eaf6"></div>
<div style="left:370px;top:814px;width:32px;height:1px;background:#9db3cd"></div>
<div style="left:403px;top:799px;width:373px;height:15px;background:#efefef"></div>
<div class="t" style="left:406px;top:806.69px;font-size:11px;letter-spacing:0.1px;">1010412_</div>
<div style="left:402px;top:63px;width:1px;height:751px;background:#a9c0dc"></div>
<div style="left:515px;top:63px;width:1px;height:751px;background:repeating-linear-gradient(#a8a8a8 0 1px,transparent 1px 2px)"></div>
<div style="left:370px;top:143px;width:32px;height:15px;background:#fdd08c;border-top:1px solid #f5a640"></div>
<div style="left:403px;top:142px;width:114px;height:18px;border:2px solid #000;background:#fff"></div>
<div class="t" style="left:406px;top:150.69px;font-size:11px;letter-spacing:0.1px;">065002</div>
<div style="left:776px;top:45px;width:16px;height:769px;background:#7497c0"></div>
<div style="left:776px;top:45px;width:16px;height:16px;border:1px solid #5571a2;background:linear-gradient(90deg,#dbe8f8 0 50%,#c5d8f0 50%)"></div>
<div style="left:776px;top:61px;width:16px;height:16px;border:1px solid #5571a2;background:linear-gradient(90deg,#dbe8f8 0 50%,#c5d8f0 50%)"></div>
<div style="left:776px;top:77px;width:16px;height:16px;border:1px solid #5571a2;background:linear-gradient(90deg,#dbe8f8 0 50%,#c5d8f0 50%)"></div>
<svg style="left:779px;top:48px" width="10" height="9" viewBox="0 0 10 9"><rect x="0.5" y="0" width="9" height="1.2" fill="#222"/><path d="M5 2.3 L9.5 7.5 H0.5 Z" fill="#404866"/></svg>
<svg style="left:779px;top:63px" width="10" height="11" viewBox="0 0 10 11"><path d="M5 0.5 L9.5 5.2 H0.5 Z" fill="#404866"/><rect x="0.5" y="6.5" width="9" height="1.2" fill="#222"/><rect x="0.5" y="8.8" width="9" height="1.2" fill="#222"/></svg>
<svg style="left:779px;top:81px" width="10" height="7" viewBox="0 0 10 7"><path d="M5 0.5 L9.5 5.5 H0.5 Z" fill="#404866"/></svg>
<div style="left:370px;top:814px;width:422px;height:16px;background:#7396c0;border-top:1px solid #4d6288;border-bottom:1px solid #4d6288"></div>
<div style="left:370px;top:814px;width:16px;height:16px;border:1px solid #4d6288;background:linear-gradient(#d7e5f6 0 50%,#bed3ef 50%)"></div>
<svg style="left:375px;top:818px" width="6" height="9" viewBox="0 0 6 9"><path d="M5.5 0 V9 L0.5 4.5 Z" fill="#404866"/></svg>
<div style="left:386px;top:815px;width:248px;height:14px;border-right:1px solid #4d6288;background:linear-gradient(#d7e5f6 0 50%,#bed3ef 50%)"></div>
<svg style="left:364.5px;top:421px" width="3" height="3" viewBox="0 0 3 3"><path d="M0.3 2.7 L2.7 0.3" stroke="#2a6fd6" stroke-width="1.1"/></svg>
<svg style="left:364.5px;top:425px" width="3" height="3" viewBox="0 0 3 3"><path d="M0.3 2.7 L2.7 0.3" stroke="#2a6fd6" stroke-width="1.1"/></svg>
<svg style="left:364.5px;top:429px" width="3" height="3" viewBox="0 0 3 3"><path d="M0.3 2.7 L2.7 0.3" stroke="#2a6fd6" stroke-width="1.1"/></svg>
<svg style="left:364.5px;top:433px" width="3" height="3" viewBox="0 0 3 3"><path d="M0.3 2.7 L2.7 0.3" stroke="#2a6fd6" stroke-width="1.1"/></svg>
<svg style="left:364.5px;top:437px" width="3" height="3" viewBox="0 0 3 3"><path d="M0.3 2.7 L2.7 0.3" stroke="#2a6fd6" stroke-width="1.1"/></svg>
<div style="left:793px;top:44px;width:1px;height:787px;background:#f0f0f0"></div>
<div style="left:794px;top:44px;width:4px;height:793px;background:#9a9a9a"></div>
<div style="left:798px;top:44px;width:823px;height:793px;background:#f0f0f0"></div>
<div style="left:798px;top:44px;width:823px;height:23px;background:linear-gradient(#ededed,#f8f8f8)"></div>
<div style="left:799px;top:67px;width:822px;height:764px;border-left:1px solid #a0a0a0;background:#f0f0f0"></div>
<div style="left:804px;top:69px;width:817px;height:757px;background:#fff"></div>
<div style="left:799px;top:830px;width:822px;height:1px;background:#a0a0a0"></div>
<svg style="left:0;top:0" width="1621" height="80" viewBox="0 0 1621 80"><path d="M804.5 66.5 L812.5 50.5 Q814 47.5 816.5 47.5 H895.5 Q898.0 47.5 899.5 49.5 L908.7 66.5 Z" fill="#fbfbfb"/><path d="M901.39 53 Q907.0 47.5 910.0 47.5 H991.8 Q994.3 47.5 995.8 49.5 L1004.7 66.5 L908.7 66.5 Z" fill="#f7f7f7"/><path d="M997.63 53 Q1002.9 47.5 1005.9 47.5 H1072.5 Q1075.0 47.5 1076.5 49.5 L1085.4 66.5 L1004.7 66.5 Z" fill="#f7f7f7"/><path d="M1078.33 53 Q1083.7 47.5 1086.7 47.5 H1175.5 Q1178.0 47.5 1179.5 49.5 L1188.4 66.5 L1085.4 66.5 Z" fill="#f7f7f7"/><path d="M1181.33 53 Q1187.0 47.5 1190.0 47.5 H1297 Q1299.5 47.5 1301 49.5 L1309.5 66.5 L1188.4 66.5 Z" fill="#f7f7f7"/><path d="M1302.75 53 Q1307.5 47.5 1310.5 47.5 H1353.6 Q1356.1 47.5 1357.6 49.5 L1366.5 66.5 L1309.5 66.5 Z" fill="#f7f7f7"/><path d="M1359.43 53 Q1364.6 47.5 1367.6 47.5 H1426.8 Q1429.3 47.5 1430.8 49.5 L1439 66.5 L1366.5 66.5 Z" fill="#f7f7f7"/><path d="M804.5 66.5 L812.5 50.5 Q814 47.5 816.5 47.5 H895.5 Q898.0 47.5 899.5 49.5 L908.7 66.5" fill="none" stroke="#a0a0a0" stroke-width="1"/><path d="M901.39 53 Q907.0 47.5 910.0 47.5 H991.8 Q994.3 47.5 995.8 49.5 L1004.7 66.5" fill="none" stroke="#a0a0a0" stroke-width="1"/><path d="M997.63 53 Q1002.9 47.5 1005.9 47.5 H1072.5 Q1075.0 47.5 1076.5 49.5 L1085.4 66.5" fill="none" stroke="#a0a0a0" stroke-width="1"/><path d="M1078.33 53 Q1083.7 47.5 1086.7 47.5 H1175.5 Q1178.0 47.5 1179.5 49.5 L1188.4 66.5" fill="none" stroke="#a0a0a0" stroke-width="1"/><path d="M1181.33 53 Q1187.0 47.5 1190.0 47.5 H1297 Q1299.5 47.5 1301 49.5 L1309.5 66.5" fill="none" stroke="#a0a0a0" stroke-width="1"/><path d="M1302.75 53 Q1307.5 47.5 1310.5 47.5 H1353.6 Q1356.1 47.5 1357.6 49.5 L1366.5 66.5" fill="none" stroke="#a0a0a0" stroke-width="1"/><path d="M1359.43 53 Q1364.6 47.5 1367.6 47.5 H1426.8 Q1429.3 47.5 1430.8 49.5 L1439 66.5" fill="none" stroke="#a0a0a0" stroke-width="1"/><path d="M799 66.5 H804.5 M1439 66.5 H1621" stroke="#a0a0a0" stroke-width="1"/></svg>
<svg style="left:816px;top:49px" width="14" height="17" viewBox="0 0 14 17"><defs><linearGradient id="dg" x1="0" x2="1"><stop offset="0" stop-color="#f6f1e6"/><stop offset="1" stop-color="#e4dccd"/></linearGradient></defs><path d="M5 0.3 H10.5 L13 2.8 V12.3 H5 Z" fill="url(#dg)" stroke="#d8d0c2" stroke-width="0.5"/><path d="M10.3 0.5 L12.8 3 L10.6 3.2 Z" fill="#8a8a8a"/><path d="M1 3.6 H6.6 L9 6 V15.7 H1 Z" fill="url(#dg)" stroke="#d8d0c2" stroke-width="0.5"/><path d="M6.4 3.8 L8.8 6.2 L6.6 6.5 Z" fill="#7a7a7a"/></svg>
<svg style="left:908px;top:49px" width="16" height="16" viewBox="0 0 16 16"><path d="M0.5 1.5 L3 0.3 H12 V14.5 L3 15.3 L0.5 14 Z" fill="#c2c8d0"/><path d="M0.5 1.5 L3 0.3 V15.3 L0.5 14 Z" fill="#9ea6b0"/><rect x="3.3" y="1.3" width="9" height="5" rx="0.6" fill="#f7c400"/><rect x="6.2" y="3.2" width="3" height="0.8" fill="#c89a00"/><rect x="3.3" y="11.4" width="8.5" height="3.6" rx="0.5" fill="#3fc030"/><rect x="5.3" y="7.4" width="9.4" height="5" rx="0.6" fill="#20c8f0"/><rect x="8.5" y="9.4" width="3.2" height="0.8" fill="#10a0c8"/></svg>
<svg style="left:1003.5px;top:50.5px" width="15" height="13" viewBox="0 0 15 13"><defs><linearGradient id="hh" x1="0" x2="1"><stop offset="0" stop-color="#c89a00"/><stop offset="0.6" stop-color="#e8b800"/><stop offset="1" stop-color="#ffe000"/></linearGradient></defs><path d="M0.6 7.8 Q0.6 0.2 6.2 0.2 Q10.8 0.2 11.2 6.8 L14.5 9.4 Q14.6 12 12.5 11.6 L6 10.2 Q1.5 9.8 0.6 7.8 Z" fill="url(#hh)" stroke="#9a7a00" stroke-width="0.5"/></svg>
<svg style="left:1086.5px;top:50.5px" width="12" height="14" viewBox="0 0 12 14"><path d="M0.3 0.3 H7.8 L11.2 3.7 V13.2 H0.3 Z" fill="#f2f2f2" stroke="#d6d6d6" stroke-width="0.6"/><path d="M7.8 0.3 V3.7 H11.2" fill="#dcdcdc"/><path d="M3.2 5.2 Q6 7.5 8.2 11 M8.8 5.2 Q5.6 7.6 2.8 9.8" stroke="#3a8a2a" stroke-width="1.7" fill="none"/></svg>
<svg style="left:1189px;top:49px" width="12" height="16" viewBox="0 0 12 16"><path d="M3.5 0.2 H7.5 V3.3 H10.6 L5.5 7.8 L0.9 3.3 H3.5 Z" fill="#62d84a" stroke="#48a838" stroke-width="0.4"/><path d="M0.3 7.5 L1.5 6 H10 L11.3 7.5 V15.6 H0.3 Z" fill="#d8ad6a" stroke="#a58048" stroke-width="0.5"/><rect x="0.3" y="6" width="11" height="2" fill="#b08444"/><rect x="2" y="10" width="7.5" height="0.8" fill="#c89858"/></svg>
<svg style="left:1309px;top:49.5px" width="14" height="16" viewBox="0 0 14 16"><defs><linearGradient id="mn" x1="0" y1="0" x2="1" y2="1"><stop offset="0" stop-color="#0010d8"/><stop offset="0.45" stop-color="#1030e8"/><stop offset="0.5" stop-color="#b8c4ff"/><stop offset="1" stop-color="#0008b0"/></linearGradient></defs><path d="M1.3 0.3 L13.6 1.5 L13 10.5 L0.3 8.6 Z" fill="url(#mn)" stroke="#c8c8c0" stroke-width="0.6"/><ellipse cx="7" cy="13.3" rx="4.3" ry="2" fill="#d4d4d4" stroke="#b8b8b8" stroke-width="0.5"/></svg>
<div class="t" style="left:834.2px;top:57.19px;font-size:11px;letter-spacing:0.5px;font-weight:bold">Généralités</div>
<div class="t" style="left:926px;top:57.19px;font-size:11px;letter-spacing:-0.36px;">Origine Besoin</div>
<div class="t" style="left:1022px;top:57.19px;font-size:11px;letter-spacing:-0.2px;">Destination</div>
<div class="t" style="left:1102.7px;top:57.19px;font-size:11px;letter-spacing:-0.227px;">Caractéristiques</div>
<div class="t" style="left:1205.7px;top:57.19px;font-size:11px;letter-spacing:-0.25px;">Calculs des besoins</div>
<div class="t" style="left:1327.2px;top:57.19px;font-size:11px;letter-spacing:-0.3px;">Image</div>
<div class="t" style="left:1366px;top:57.19px;font-size:11px;letter-spacing:-0.21px;">Qui, quand ?</div>
<div style="left:805px;top:72px;width:650px;height:25px;background:#02a4b0"></div>
<div class="t" style="left:837.4px;top:86.99px;font-size:11px;font-weight:bold;color:#fff">GENERALITES</div>
<div class="t" style="left:1297.6px;top:87.19px;font-size:11px;font-weight:bold;color:#fff">MODE DE GESTION</div>
<div style="left:805px;top:312px;width:650px;height:25px;background:#02a4b0"></div>
<div class="t" style="left:835px;top:326.99px;font-size:11px;font-weight:bold;color:#fff">COMPTABILITE</div>
<div style="left:805px;top:452px;width:650px;height:25px;background:#02a4b0"></div>
<div class="t" style="left:834.2px;top:466.99px;font-size:11px;font-weight:bold;color:#fff">STOCK</div>
<div class="t" style="right:719.6px;text-align:right;top:110.79px;font-size:11px;letter-spacing:-0.1px;">Type</div>
<div style="left:909px;top:102px;width:40px;height:20px;background:#e9eef9"></div>
<div class="t" style="left:912.5px;top:111.69px;font-size:11px;letter-spacing:0.64px;font-weight:bold;-webkit-text-stroke:0.3px #000">R</div>
<div class="t" style="right:620px;text-align:right;top:110.79px;font-size:11px;letter-spacing:-0.167px;">Article</div>
<div style="left:1009px;top:102px;width:199px;height:20px;background:#e9eef9"></div>
<div class="t" style="left:1012.5px;top:111.69px;font-size:11px;letter-spacing:1.15px;font-weight:bold;-webkit-text-stroke:0.3px #000">065002</div>
<div class="t" style="right:719.6px;text-align:right;top:135.69px;font-size:11px;letter-spacing:-0.11px;">Désignation</div>
<div style="left:909px;top:127px;width:299px;height:20px;background:#e9eef9"></div>
<div class="t" style="left:912.5px;top:136.69px;font-size:11px;letter-spacing:0.64px;font-weight:bold;-webkit-text-stroke:0.3px #000">Mod Designation Art 065002</div>
<div class="t" style="right:719.6px;text-align:right;top:160.49px;font-size:11px;letter-spacing:0.0px;">Des. Longue</div>
<div style="left:909px;top:152px;width:299px;height:18px;background:#e9eef9"></div>
<div class="t" style="left:912.5px;top:160.85px;font-size:11px;letter-spacing:0.64px;font-weight:bold;-webkit-text-stroke:0.3px #000">Test GAC</div>
<div style="left:909px;top:171px;width:299px;height:18px;background:#e9eef9"></div>
<div style="left:909px;top:190px;width:299px;height:18px;background:#e9eef9"></div>
<div class="t" style="right:719.6px;text-align:right;top:223.29px;font-size:11px;letter-spacing:-0.108px;">Mot directeur</div>
<div style="left:909px;top:214px;width:120px;height:20px;background:#e9eef9"></div>
<div class="t" style="left:912.5px;top:223.69px;font-size:11px;letter-spacing:1.15px;font-weight:bold;-webkit-text-stroke:0.3px #000">065002</div>
<div class="t" style="right:719.6px;text-align:right;top:247.99px;font-size:11px;letter-spacing:-0.367px;">Famille</div>
<div style="left:909px;top:239px;width:120px;height:20px;background:#e9eef9"></div>
<div style="left:1032px;top:240px;width:14px;height:14px;border:2px solid #c4c4c4;background:#fff"></div>
<svg style="left:1032px;top:240px" width="14" height="14" viewBox="0 0 14 14"><path d="M4.7 5.2 Q4.7 3.5 7 3.5 Q9.3 3.5 9.3 5.3 Q9.3 6.6 7.9 7.3 Q6.8 7.9 6.8 8.9" fill="none" stroke="#000" stroke-width="1.7"/><rect x="5.9" y="10.1" width="2" height="1.1" fill="#000"/></svg>
<div class="t" style="right:719.6px;text-align:right;top:272.89px;font-size:11px;letter-spacing:-0.282px;">Sous-famille</div>
<div style="left:909px;top:264px;width:120px;height:20px;background:#e9eef9"></div>
<div style="left:1032px;top:265px;width:14px;height:14px;border:2px solid #c4c4c4;background:#fff"></div>
<svg style="left:1032px;top:265px" width="14" height="14" viewBox="0 0 14 14"><path d="M4.7 5.2 Q4.7 3.5 7 3.5 Q9.3 3.5 9.3 5.3 Q9.3 6.6 7.9 7.3 Q6.8 7.9 6.8 8.9" fill="none" stroke="#000" stroke-width="1.7"/><rect x="5.9" y="10.1" width="2" height="1.1" fill="#000"/></svg>
<div class="t" style="right:719.6px;text-align:right;top:298.09px;font-size:11px;letter-spacing:-0.371px;">Ss-sous-famille</div>
<div style="left:909px;top:289px;width:120px;height:20px;background:#e9eef9"></div>
<div style="left:1032px;top:290px;width:14px;height:14px;border:2px solid #c4c4c4;background:#fff"></div>
<svg style="left:1032px;top:290px" width="14" height="14" viewBox="0 0 14 14"><path d="M4.7 5.2 Q4.7 3.5 7 3.5 Q9.3 3.5 9.3 5.3 Q9.3 6.6 7.9 7.3 Q6.8 7.9 6.8 8.9" fill="none" stroke="#000" stroke-width="1.7"/><rect x="5.9" y="10.1" width="2" height="1.1" fill="#000"/></svg>
<div class="t" style="right:229.79999999999995px;text-align:right;top:110.89px;font-size:11px;letter-spacing:-0.133px;">Approvisionné</div>
<div style="left:1399px;top:102px;width:10px;height:17px;background:#e9eef9"></div>
<div style="left:1399px;top:105px;width:10px;height:10px;border:1px solid #cfcfcf;background:#fff"></div>
<svg style="left:1400px;top:106px" width="8" height="8" viewBox="0 0 8 8"><path d="M1.2 4.2 L3.2 6.2 L7 1.5" fill="none" stroke="#b8b8b8" stroke-width="1"/></svg>
<div class="t" style="right:85px;text-align:right;top:110.89px;font-size:11px;letter-spacing:-0.167px;">Documents liés ?</div>
<div style="left:1544px;top:105px;width:10px;height:10px;border:1px solid #cfcfcf;background:#fff"></div>
<div class="t" style="right:229.79999999999995px;text-align:right;top:132.89px;font-size:11px;letter-spacing:-0.2px;">Fabriqué</div>
<div style="left:1399px;top:124px;width:10px;height:17px;background:#e9eef9"></div>
<div style="left:1399px;top:127px;width:10px;height:10px;border:1px solid #cfcfcf;background:#fff"></div>
<div class="t" style="right:229.79999999999995px;text-align:right;top:154.69px;font-size:11px;letter-spacing:-0.12px;">Sous-Traité</div>
<div style="left:1399px;top:146px;width:10px;height:17px;background:#e9eef9"></div>
<div style="left:1399px;top:149px;width:10px;height:10px;border:1px solid #cfcfcf;background:#fff"></div>
<div class="t" style="right:229.79999999999995px;text-align:right;top:176.89px;font-size:11px;letter-spacing:-0.276px;">Origine principale</div>
<div style="left:1399px;top:168px;width:100px;height:20px;background:#e9eef9"></div>
<div class="t" style="left:1402.5px;top:177.69px;font-size:11px;letter-spacing:0.64px;font-weight:bold;-webkit-text-stroke:0.3px #000">A</div>
<div style="left:1502px;top:169px;width:14px;height:14px;border:2px solid #c4c4c4;background:#fff"></div>
<svg style="left:1502px;top:169px" width="14" height="14" viewBox="0 0 14 14"><path d="M4.7 5.2 Q4.7 3.5 7 3.5 Q9.3 3.5 9.3 5.3 Q9.3 6.6 7.9 7.3 Q6.8 7.9 6.8 8.9" fill="none" stroke="#000" stroke-width="1.7"/><rect x="5.9" y="10.1" width="2" height="1.1" fill="#000"/></svg>
<div class="t" style="left:1522.5px;top:176.89px;font-size:11px;letter-spacing:-0.289px;">Origine Ap</div>
<div class="t" style="right:229.79999999999995px;text-align:right;top:201.99px;font-size:11px;letter-spacing:-0.105px;">Destination fabrication</div>
<div style="left:1399px;top:193px;width:10px;height:17px;background:#e9eef9"></div>
<div style="left:1399px;top:196px;width:10px;height:10px;border:1px solid #cfcfcf;background:#fff"></div>
<div class="t" style="right:229.79999999999995px;text-align:right;top:224.29px;font-size:11px;letter-spacing:-0.069px;">Destination vente</div>
<div style="left:1399px;top:215px;width:10px;height:17px;background:#e9eef9"></div>
<div style="left:1399px;top:218px;width:10px;height:10px;border:1px solid #cfcfcf;background:#fff"></div>
<svg style="left:1400px;top:219px" width="8" height="8" viewBox="0 0 8 8"><path d="M1.2 4.2 L3.2 6.2 L7 1.5" fill="none" stroke="#b8b8b8" stroke-width="1"/></svg>
<div class="t" style="right:229.79999999999995px;text-align:right;top:245.99px;font-size:11px;letter-spacing:-0.168px;">Destination sous-traitance</div>
<div style="left:1399px;top:237px;width:10px;height:17px;background:#e9eef9"></div>
<div style="left:1399px;top:240px;width:10px;height:10px;border:1px solid #cfcfcf;background:#fff"></div>
<div class="t" style="right:721.7px;text-align:right;top:351.19px;font-size:11px;letter-spacing:-0.121px;">Règle comptable</div>
<div style="left:907px;top:342px;width:23px;height:20px;background:#e9eef9"></div>
<div class="t" style="left:910.5px;top:351.69px;font-size:11px;letter-spacing:1.15px;font-weight:bold;-webkit-text-stroke:0.3px #000">3</div>
<div style="left:933px;top:343px;width:14px;height:14px;border:2px solid #c4c4c4;background:#fff"></div>
<svg style="left:933px;top:343px" width="14" height="14" viewBox="0 0 14 14"><path d="M4.7 5.2 Q4.7 3.5 7 3.5 Q9.3 3.5 9.3 5.3 Q9.3 6.6 7.9 7.3 Q6.8 7.9 6.8 8.9" fill="none" stroke="#000" stroke-width="1.7"/><rect x="5.9" y="10.1" width="2" height="1.1" fill="#000"/></svg>
<div class="t" style="left:953.6px;top:351.19px;font-size:11px;letter-spacing:-0.111px;">Indépendant de l'Ori</div>
<div class="t" style="right:721.7px;text-align:right;top:376.09px;font-size:11px;letter-spacing:-0.275px;">Critère 1</div>
<div style="left:907px;top:367px;width:120px;height:20px;background:#e9eef9"></div>
<div class="t" style="left:910.5px;top:376.69px;font-size:11px;letter-spacing:0.64px;font-weight:bold;-webkit-text-stroke:0.3px #000">ACP</div>
<div style="left:1030px;top:368px;width:14px;height:14px;border:2px solid #c4c4c4;background:#fff"></div>
<svg style="left:1030px;top:368px" width="14" height="14" viewBox="0 0 14 14"><path d="M4.7 5.2 Q4.7 3.5 7 3.5 Q9.3 3.5 9.3 5.3 Q9.3 6.6 7.9 7.3 Q6.8 7.9 6.8 8.9" fill="none" stroke="#000" stroke-width="1.7"/><rect x="5.9" y="10.1" width="2" height="1.1" fill="#000"/></svg>
<div class="t" style="left:1050.1px;top:376.09px;font-size:11px;letter-spacing:-0.217px;">Acompte</div>
<div class="t" style="right:721.7px;text-align:right;top:400.99px;font-size:11px;letter-spacing:-0.275px;">Critère 2</div>
<div style="left:907px;top:392px;width:120px;height:20px;background:#e9eef9"></div>
<div class="t" style="left:910.5px;top:401.69px;font-size:11px;letter-spacing:1.15px;font-weight:bold;-webkit-text-stroke:0.3px #000">0</div>
<div style="left:1030px;top:393px;width:14px;height:14px;border:2px solid #c4c4c4;background:#fff"></div>
<svg style="left:1030px;top:393px" width="14" height="14" viewBox="0 0 14 14"><path d="M4.7 5.2 Q4.7 3.5 7 3.5 Q9.3 3.5 9.3 5.3 Q9.3 6.6 7.9 7.3 Q6.8 7.9 6.8 8.9" fill="none" stroke="#000" stroke-width="1.7"/><rect x="5.9" y="10.1" width="2" height="1.1" fill="#000"/></svg>
<div class="t" style="right:721.7px;text-align:right;top:425.79px;font-size:11px;letter-spacing:-0.275px;">Critère 3</div>
<div style="left:907px;top:417px;width:120px;height:20px;background:#e9eef9"></div>
<div class="t" style="left:910.5px;top:426.69px;font-size:11px;letter-spacing:1.15px;font-weight:bold;-webkit-text-stroke:0.3px #000">0</div>
<div style="left:1030px;top:418px;width:14px;height:14px;border:2px solid #c4c4c4;background:#fff"></div>
<svg style="left:1030px;top:418px" width="14" height="14" viewBox="0 0 14 14"><path d="M4.7 5.2 Q4.7 3.5 7 3.5 Q9.3 3.5 9.3 5.3 Q9.3 6.6 7.9 7.3 Q6.8 7.9 6.8 8.9" fill="none" stroke="#000" stroke-width="1.7"/><rect x="5.9" y="10.1" width="2" height="1.1" fill="#000"/></svg>
<div class="t" style="right:724.2px;text-align:right;top:495.69px;font-size:11px;letter-spacing:-0.208px;">Gestion stock</div>
<div style="left:905px;top:487px;width:10px;height:17px;background:#e9eef9"></div>
<div style="left:905px;top:490px;width:10px;height:10px;border:1px solid #cfcfcf;background:#fff"></div>
<svg style="left:906px;top:491px" width="8" height="8" viewBox="0 0 8 8"><path d="M1.2 4.2 L3.2 6.2 L7 1.5" fill="none" stroke="#b8b8b8" stroke-width="1"/></svg>
<div class="t" style="right:723px;text-align:right;top:517.89px;font-size:11px;letter-spacing:-0.345px;">Gestionnaire</div>
<div style="left:906px;top:509px;width:120px;height:20px;background:#e9eef9"></div>
<div class="t" style="left:909.5px;top:518.69px;font-size:11px;letter-spacing:0.64px;font-weight:bold;-webkit-text-stroke:0.3px #000">Gen</div>
<div style="left:1029px;top:510px;width:14px;height:14px;border:2px solid #c4c4c4;background:#fff"></div>
<svg style="left:1029px;top:510px" width="14" height="14" viewBox="0 0 14 14"><path d="M4.7 5.2 Q4.7 3.5 7 3.5 Q9.3 3.5 9.3 5.3 Q9.3 6.6 7.9 7.3 Q6.8 7.9 6.8 8.9" fill="none" stroke="#000" stroke-width="1.7"/><rect x="5.9" y="10.1" width="2" height="1.1" fill="#000"/></svg>
<div class="t" style="left:1049.3px;top:517.49px;font-size:11px;letter-spacing:-0.233px;">Gestionnaire défaut</div>
<div class="t" style="right:723px;text-align:right;top:542.69px;font-size:11px;letter-spacing:-0.115px;">Stock sécurité</div>
<div style="left:906px;top:534px;width:120px;height:20px;background:#e9eef9"></div>
<div class="t" style="left:937.3px;top:543.69px;font-size:11px;letter-spacing:1.15px;font-weight:bold;-webkit-text-stroke:0.3px #000">0,000</div>
<div style="left:906px;top:559px;width:120px;height:20px;background:#e9eef9"></div>
<div style="left:1029px;top:560px;width:14px;height:14px;border:2px solid #c4c4c4;background:#fff"></div>
<svg style="left:1029px;top:560px" width="14" height="14" viewBox="0 0 14 14"><path d="M4.7 5.2 Q4.7 3.5 7 3.5 Q9.3 3.5 9.3 5.3 Q9.3 6.6 7.9 7.3 Q6.8 7.9 6.8 8.9" fill="none" stroke="#000" stroke-width="1.7"/><rect x="5.9" y="10.1" width="2" height="1.1" fill="#000"/></svg>
<div class="t" style="left:1049.3px;top:567.19px;font-size:11px;letter-spacing:0.225px;">Unité</div>
<div class="t" style="right:349.20000000000005px;text-align:right;top:515.79px;font-size:11px;letter-spacing:-0.186px;">DPAC Approvisionnement</div>
<div style="left:1280px;top:507px;width:100px;height:20px;background:#e9eef9"></div>
<div class="t" style="left:1303.6px;top:516.69px;font-size:11px;letter-spacing:1.15px;font-weight:bold;-webkit-text-stroke:0.3px #000">0,000</div>
<div style="left:1374px;top:509px;width:6px;height:13px;background:#fff"></div>
<div class="t" style="left:1375px;top:516.19px;font-size:11px;">.</div>
<div style="left:1385px;top:507px;width:55px;height:20px;background:#e9eef9"></div>
<div class="t" style="left:1388.7px;top:516.69px;font-size:11px;letter-spacing:0.64px;font-weight:bold;-webkit-text-stroke:0.3px #000">EUR</div>
<div class="t" style="left:1442px;top:516.19px;font-size:11px;letter-spacing:-0.12px;">€</div>
<div class="t" style="right:349.20000000000005px;text-align:right;top:540.59px;font-size:11px;letter-spacing:-0.144px;">DPAC Sous-traitance</div>
<div style="left:1280px;top:532px;width:100px;height:20px;background:#e9eef9"></div>
<div class="t" style="left:1303.6px;top:541.69px;font-size:11px;letter-spacing:1.15px;font-weight:bold;-webkit-text-stroke:0.3px #000">0,000</div>
<div style="left:1374px;top:534px;width:6px;height:13px;background:#fff"></div>
<div class="t" style="left:1375px;top:541.19px;font-size:11px;">.</div>
<div style="left:1385px;top:532px;width:55px;height:20px;background:#e9eef9"></div>
<div class="t" style="left:1388.7px;top:541.69px;font-size:11px;letter-spacing:0.64px;font-weight:bold;-webkit-text-stroke:0.3px #000">EUR</div>
<div class="t" style="left:1442px;top:541.19px;font-size:11px;letter-spacing:-0.12px;">€</div>
<div class="t" style="right:349.20000000000005px;text-align:right;top:565.49px;font-size:11px;letter-spacing:0.044px;">PUMP Stock</div>
<div style="left:1280px;top:557px;width:98px;height:17px;background:#e9eef9"></div>
<div class="t" style="left:1303.6px;top:565.43px;font-size:11px;letter-spacing:1.15px;font-weight:bold;-webkit-text-stroke:0.3px #000">2,4247</div>
<div class="t" style="left:1380.4px;top:565.29px;font-size:11px;letter-spacing:0.18px;">(+) (06/11/2024)</div>
<div style="left:810px;top:584px;width:740px;height:190px;border:2px solid #5c5c5c;background:#fff"></div>
<div style="left:812px;top:586px;width:200px;height:18px;background:linear-gradient(#f8dba0,#f0c163)"></div>
<div style="left:1012px;top:586px;width:90px;height:18px;border:1px solid #a9c0dc;background:linear-gradient(#fbfcfd,#d7dfeb)"></div>
<div class="t" style="left:856.5px;width:400px;text-align:center;top:595.69px;font-size:11px;letter-spacing:-0.12px;">Section</div>
<div style="left:1101px;top:586px;width:90px;height:18px;border:1px solid #a9c0dc;background:linear-gradient(#fbfcfd,#d7dfeb)"></div>
<div class="t" style="left:945.5px;width:400px;text-align:center;top:595.69px;font-size:11px;letter-spacing:-0.12px;">Emplacement</div>
<div style="left:1190px;top:586px;width:90px;height:18px;border:1px solid #a9c0dc;background:linear-gradient(#fbfcfd,#d7dfeb)"></div>
<div class="t" style="left:1034.5px;width:400px;text-align:center;top:595.69px;font-size:11px;letter-spacing:-0.12px;">Qté physique</div>
<div style="left:812px;top:604px;width:467px;height:16px;background:#fff;border-bottom:1px dotted #c8c8c8"></div>
<div class="t" style="left:1015.4px;top:612.19px;font-size:11px;letter-spacing:-0.12px;">01-CTR</div>
<div class="t" style="left:1104px;top:612.19px;font-size:11px;letter-spacing:-0.12px;">Emp02</div>
<div class="t" style="right:344px;text-align:right;top:612.19px;font-size:11px;letter-spacing:-0.12px;">4,000</div>
<div style="left:812px;top:620px;width:467px;height:16px;background:#efefef;border-bottom:1px dotted #c8c8c8"></div>
<div class="t" style="left:1015.4px;top:628.19px;font-size:11px;letter-spacing:-0.12px;">01-CTR</div>
<div class="t" style="left:1104px;top:628.19px;font-size:11px;letter-spacing:-0.12px;">Emp03</div>
<div class="t" style="right:344px;text-align:right;top:628.19px;font-size:11px;letter-spacing:-0.12px;">5,000</div>
<div style="left:812px;top:636px;width:467px;height:16px;background:#fff;border-bottom:1px dotted #c8c8c8"></div>
<div class="t" style="left:1015.4px;top:644.19px;font-size:11px;letter-spacing:-0.12px;">01-EXP</div>
<div class="t" style="left:1104px;top:644.19px;font-size:11px;letter-spacing:-0.12px;">01-EXP</div>
<div class="t" style="right:344px;text-align:right;top:644.19px;font-size:11px;letter-spacing:-0.12px;">5,000</div>
<div style="left:812px;top:651px;width:467px;height:16px;background:#efefef;border-bottom:1px dotted #c8c8c8"></div>
<div class="t" style="left:1015.4px;top:659.19px;font-size:11px;letter-spacing:-0.12px;">01-MAG</div>
<div class="t" style="left:1104px;top:659.19px;font-size:11px;letter-spacing:-0.12px;">01-MAG</div>
<div class="t" style="right:344px;text-align:right;top:659.19px;font-size:11px;letter-spacing:-0.12px;">-31,000</div>
<div style="left:1101px;top:604px;width:1px;height:64px;border-left:1px dotted #c8c8c8"></div>
<div style="left:1190px;top:604px;width:1px;height:64px;border-left:1px dotted #c8c8c8"></div>
<div style="left:1279px;top:586px;width:1px;height:82px;background:#a9c0dc"></div>
<div style="left:1012px;top:667px;width:268px;height:1px;background:#a9c0dc"></div>
<div style="left:960px;top:603px;width:53px;height:18px;border:2px solid #000;border-left:none"></div>
<div style="left:449px;top:147px;width:253px;height:670px;background:#f2f2f2;border:1px solid #cccccc;box-shadow:2px 2px 2px rgba(0,0,0,0.5)"></div>
<div style="left:450px;top:148px;width:30px;height:668px;background:#f0f0f0"></div>
<div style="left:480px;top:153px;width:218px;height:1px;background:#d7d7d7"></div>
<div class="t" style="left:484.4px;top:167.91px;font-size:11.8px;color:#000">Création (F9)</div>
<div class="t" style="left:484.4px;top:189.91px;font-size:11.8px;color:#000">Modification (F1)</div>
<div class="t" style="left:484.4px;top:211.91px;font-size:11.8px;color:#000">Duplication (F7)</div>
<div class="t" style="left:484.4px;top:233.91px;font-size:11.8px;color:#000">Suppression Logique (F6)</div>
<div class="t" style="left:484.4px;top:255.91px;font-size:11.8px;color:#000">Détail (F8)</div>
<div class="t" style="left:484.4px;top:277.91px;font-size:11.8px;color:#000">Consultation Inf. Techniques</div>
<div class="t" style="left:484.4px;top:299.91px;font-size:11.8px;color:#000">Historique (F10)</div>
<div class="t" style="left:484.4px;top:321.91px;font-size:11.8px;color:#000">Eléments Récents (Maj+F8)</div>
<div class="t" style="left:484.4px;top:343.91px;font-size:11.8px;color:#000">Historique Messages / Entité</div>
<div class="t" style="left:484.4px;top:365.91px;font-size:11.8px;color:#6d6d6d">Envoyer un message</div>
<div style="left:480px;top:380px;width:218px;height:1px;background:#d7d7d7"></div>
<div class="t" style="left:484.4px;top:394.91px;font-size:11.8px;color:#000">Nouvelle Tâche</div>
<div class="t" style="left:484.4px;top:416.91px;font-size:11.8px;color:#6d6d6d">Tâches de l'Entité</div>
<div style="left:480px;top:432px;width:218px;height:1px;background:#d7d7d7"></div>
<div class="t" style="left:484.4px;top:445.91px;font-size:11.8px;color:#000">Joindre un document</div>
<div class="t" style="left:484.4px;top:467.91px;font-size:11.8px;color:#000">Documents GED</div>
<div style="left:480px;top:482px;width:218px;height:1px;background:#d7d7d7"></div>
<div class="t" style="left:484.4px;top:496.91px;font-size:11.8px;color:#000">Consultation Documents GED</div>
<div class="t" style="left:484.4px;top:518.91px;font-size:11.8px;color:#000">Approbation</div>
<div style="left:480px;top:534px;width:218px;height:1px;background:#d7d7d7"></div>
<div class="t" style="left:484.4px;top:547.91px;font-size:11.8px;color:#000">Accès à ...</div>
<svg style="left:685px;top:542.5px" width="6" height="9" viewBox="0 0 6 9"><path d="M0.8 0.8 L4.6 4.5 L0.8 8.2" fill="none" stroke="#444" stroke-width="1"/></svg>
<div style="left:480px;top:562px;width:218px;height:1px;background:#d7d7d7"></div>
<div style="left:452px;top:566px;width:244px;height:22px;background:#91c9f7"></div>
<div class="t" style="left:484.4px;top:576.91px;font-size:11.8px;color:#000">Gestion ...</div>
<svg style="left:685px;top:571.5px" width="6" height="9" viewBox="0 0 6 9"><path d="M0.8 0.8 L4.6 4.5 L0.8 8.2" fill="none" stroke="#444" stroke-width="1"/></svg>
<div style="left:480px;top:592px;width:218px;height:1px;background:#d7d7d7"></div>
<div class="t" style="left:484.4px;top:605.91px;font-size:11.8px;color:#000">Exportation</div>
<svg style="left:685px;top:600.5px" width="6" height="9" viewBox="0 0 6 9"><path d="M0.8 0.8 L4.6 4.5 L0.8 8.2" fill="none" stroke="#444" stroke-width="1"/></svg>
<div class="t" style="left:484.4px;top:627.91px;font-size:11.8px;color:#000">Importation de Données</div>
<div style="left:480px;top:642px;width:218px;height:1px;background:#d7d7d7"></div>
<div class="t" style="left:484.4px;top:656.91px;font-size:11.8px;color:#6d6d6d">Modifier GenDesArt</div>
<div style="left:480px;top:672px;width:218px;height:1px;background:#d7d7d7"></div>
<div class="t" style="left:484.4px;top:685.91px;font-size:11.8px;color:#000">Ma Présentation de Démarrage</div>
<div class="t" style="left:484.4px;top:707.91px;font-size:11.8px;color:#000">Actualiser la Présentation</div>
<div class="t" style="left:484.4px;top:729.91px;font-size:11.8px;color:#000">Présentations</div>
<svg style="left:685px;top:724.5px" width="6" height="9" viewBox="0 0 6 9"><path d="M0.8 0.8 L4.6 4.5 L0.8 8.2" fill="none" stroke="#444" stroke-width="1"/></svg>
<div style="left:480px;top:744px;width:218px;height:1px;background:#d7d7d7"></div>
<div class="t" style="left:484.4px;top:758.91px;font-size:11.8px;color:#000">Définition Filtres et Tris</div>
<div class="t" style="left:484.4px;top:780.91px;font-size:11.8px;color:#000">Sélections Filtres et Tris</div>
<svg style="left:685px;top:775.5px" width="6" height="9" viewBox="0 0 6 9"><path d="M0.8 0.8 L4.6 4.5 L0.8 8.2" fill="none" stroke="#444" stroke-width="1"/></svg>
<div class="t" style="left:484.4px;top:802.91px;font-size:11.8px;color:#000">Condition par Défaut (Ctrl-F5)</div>
<div style="left:696px;top:563px;width:299px;height:269px;background:#f2f2f2;border:1px solid #cccccc;box-shadow:2px 2px 2px rgba(0,0,0,0.5)"></div>
<div style="left:697px;top:564px;width:30px;height:267px;background:#f0f0f0"></div>
<div class="t" style="left:731.8px;top:576.51px;font-size:11.8px;color:#000">Configuration Article</div>
<div class="t" style="left:731.8px;top:598.51px;font-size:11.8px;color:#000">Reset Configuration Article</div>
<div class="t" style="left:731.8px;top:620.51px;font-size:11.8px;color:#6d6d6d">Test Scénario (F11)</div>
<div style="left:727px;top:635px;width:265px;height:1px;background:#d7d7d7"></div>
<div class="t" style="left:731.8px;top:649.51px;font-size:11.8px;color:#000">Nomenclature de Définition</div>
<div class="t" style="left:731.8px;top:671.51px;font-size:11.8px;color:#000">Nomenclature de Pointeurs</div>
<div style="left:727px;top:686px;width:265px;height:1px;background:#d7d7d7"></div>
<div class="t" style="left:731.8px;top:700.51px;font-size:11.8px;color:#000">Val. Calcul point Cde. et Qté. demandée</div>
<div style="left:727px;top:715px;width:265px;height:1px;background:#d7d7d7"></div>
<div style="left:699px;top:719px;width:293px;height:22px;background:#91c9f7"></div>
<div class="t" style="left:731.8px;top:729.51px;font-size:11.8px;color:#000">Fournisseurs Liés</div>
<div class="t" style="left:731.8px;top:751.51px;font-size:11.8px;color:#000">Données Multi-Gestionnaires</div>
<div class="t" style="left:731.8px;top:773.51px;font-size:11.8px;color:#000">Quantités Forcées PDAP</div>
<div class="t" style="left:731.8px;top:795.51px;font-size:11.8px;color:#000">Test Calcul PDAP</div>
<div class="t" style="left:731.8px;top:817.51px;font-size:11.8px;color:#000">Test Valorisation PRV</div>
<svg style="left:874px;top:731px" width="13" height="20" viewBox="0 0 13 20"><path d="M0.5 0.5 V16.5 L4.3 12.8 L6.8 18.8 L9 17.9 L6.6 12 H11.8 Z" fill="#fff" stroke="#000" stroke-width="1"/></svg></body></html>
